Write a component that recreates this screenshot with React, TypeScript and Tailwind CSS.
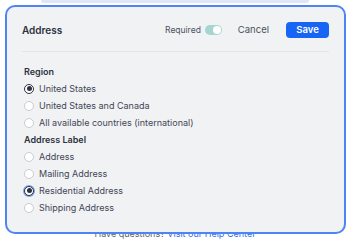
import { useState } from "react";

const regions = [
	"United States",
	"United States and Canada",
	"All available countries (international)",
];

const labels = ["Address", "Mailing Address", "Residential Address", "Shipping Address"];

type RadioRowProps = {
	label: string;
	checked: boolean;
	focused?: boolean;
	onSelect: () => void;
};

const RadioRow = ({ label, checked, focused, onSelect }: RadioRowProps) => (
	<button
		type="button"
		onClick={onSelect}
		className="flex h-[17px] items-center gap-[5px] text-left"
	>
		<span
			className={`flex h-[10px] w-[10px] items-center justify-center rounded-full border bg-white ${
				checked ? "border-[#2d3340]" : "border-[#c9ccd2]"
			} ${focused ? "ring-1 ring-[#7ea3f2]" : ""}`}
		>
			{checked && <span className="h-[5px] w-[5px] rounded-full bg-[#2d3340]" />}
		</span>
		<span className="text-[9px] text-[#3f4654]">{label}</span>
	</button>
);

export default function App() {
	const [region, setRegion] = useState(0);
	const [label, setLabel] = useState(2);
	const [required, setRequired] = useState(true);

	return (
		<div
			className="relative h-[241px] w-[350px] overflow-hidden bg-white"
			style={{ fontFamily: "Inter, 'Noto Sans', sans-serif" }}
		>
			<div className="mx-auto h-[3px] w-[268px] rounded-b-sm bg-[#dfe6fb]" />
			<p className="absolute bottom-[1px] left-0 right-0 text-center text-[9px] text-[#5b6270]">
				Have questions? <span className="text-[#2f6ef0]">Visit our Help Center</span>
			</p>

			<div className="absolute left-[5px] top-[5px] h-[229px] w-[341px] rounded-[10px] border-2 border-[#4d85f5] bg-[#f1f2f4] px-[15px]">
				<div className="flex h-[45px] items-center border-b border-[#e2e4e8] pt-[2px]">
					<h2 className="flex-1 text-[10px] font-semibold text-[#2d3340]">Address</h2>
					<span className="text-[8.5px] text-[#4a5160]">Required</span>
					<button
						type="button"
						onClick={() => setRequired(!required)}
						className={`ml-[4px] flex h-[10px] w-[17px] items-center rounded-full px-[1px] ${
							required ? "justify-end bg-[#a7d6d0]" : "justify-start bg-[#d4d7dc]"
						}`}
					>
						<span className="h-[8px] w-[8px] rounded-full bg-white" />
					</button>
					<button type="button" className="ml-[16px] text-[9.5px] text-[#4a5160]">
						Cancel
					</button>
					<button
						type="button"
						className="ml-[17px] h-[16px] w-[43px] rounded-[4px] bg-[#1665f5] text-[9.5px] font-semibold text-white"
					>
						Save
					</button>
				</div>

				<div className="flex flex-col pt-[11px] pl-[2px]">
					<h3 className="h-[17px] text-[9px] font-semibold leading-[17px] text-[#2d3340]">Region</h3>
					{regions.map((r, i) => (
						<RadioRow key={r} label={r} checked={region === i} onSelect={() => setRegion(i)} />
					))}
					<h3 className="h-[17px] text-[9px] font-semibold leading-[17px] text-[#2d3340]">
						Address Label
					</h3>
					{labels.map((l, i) => (
						<RadioRow
							key={l}
							label={l}
							checked={label === i}
							focused={i === 2}
							onSelect={() => setLabel(i)}
						/>
					))}
				</div>
			</div>
		</div>
	);
}
